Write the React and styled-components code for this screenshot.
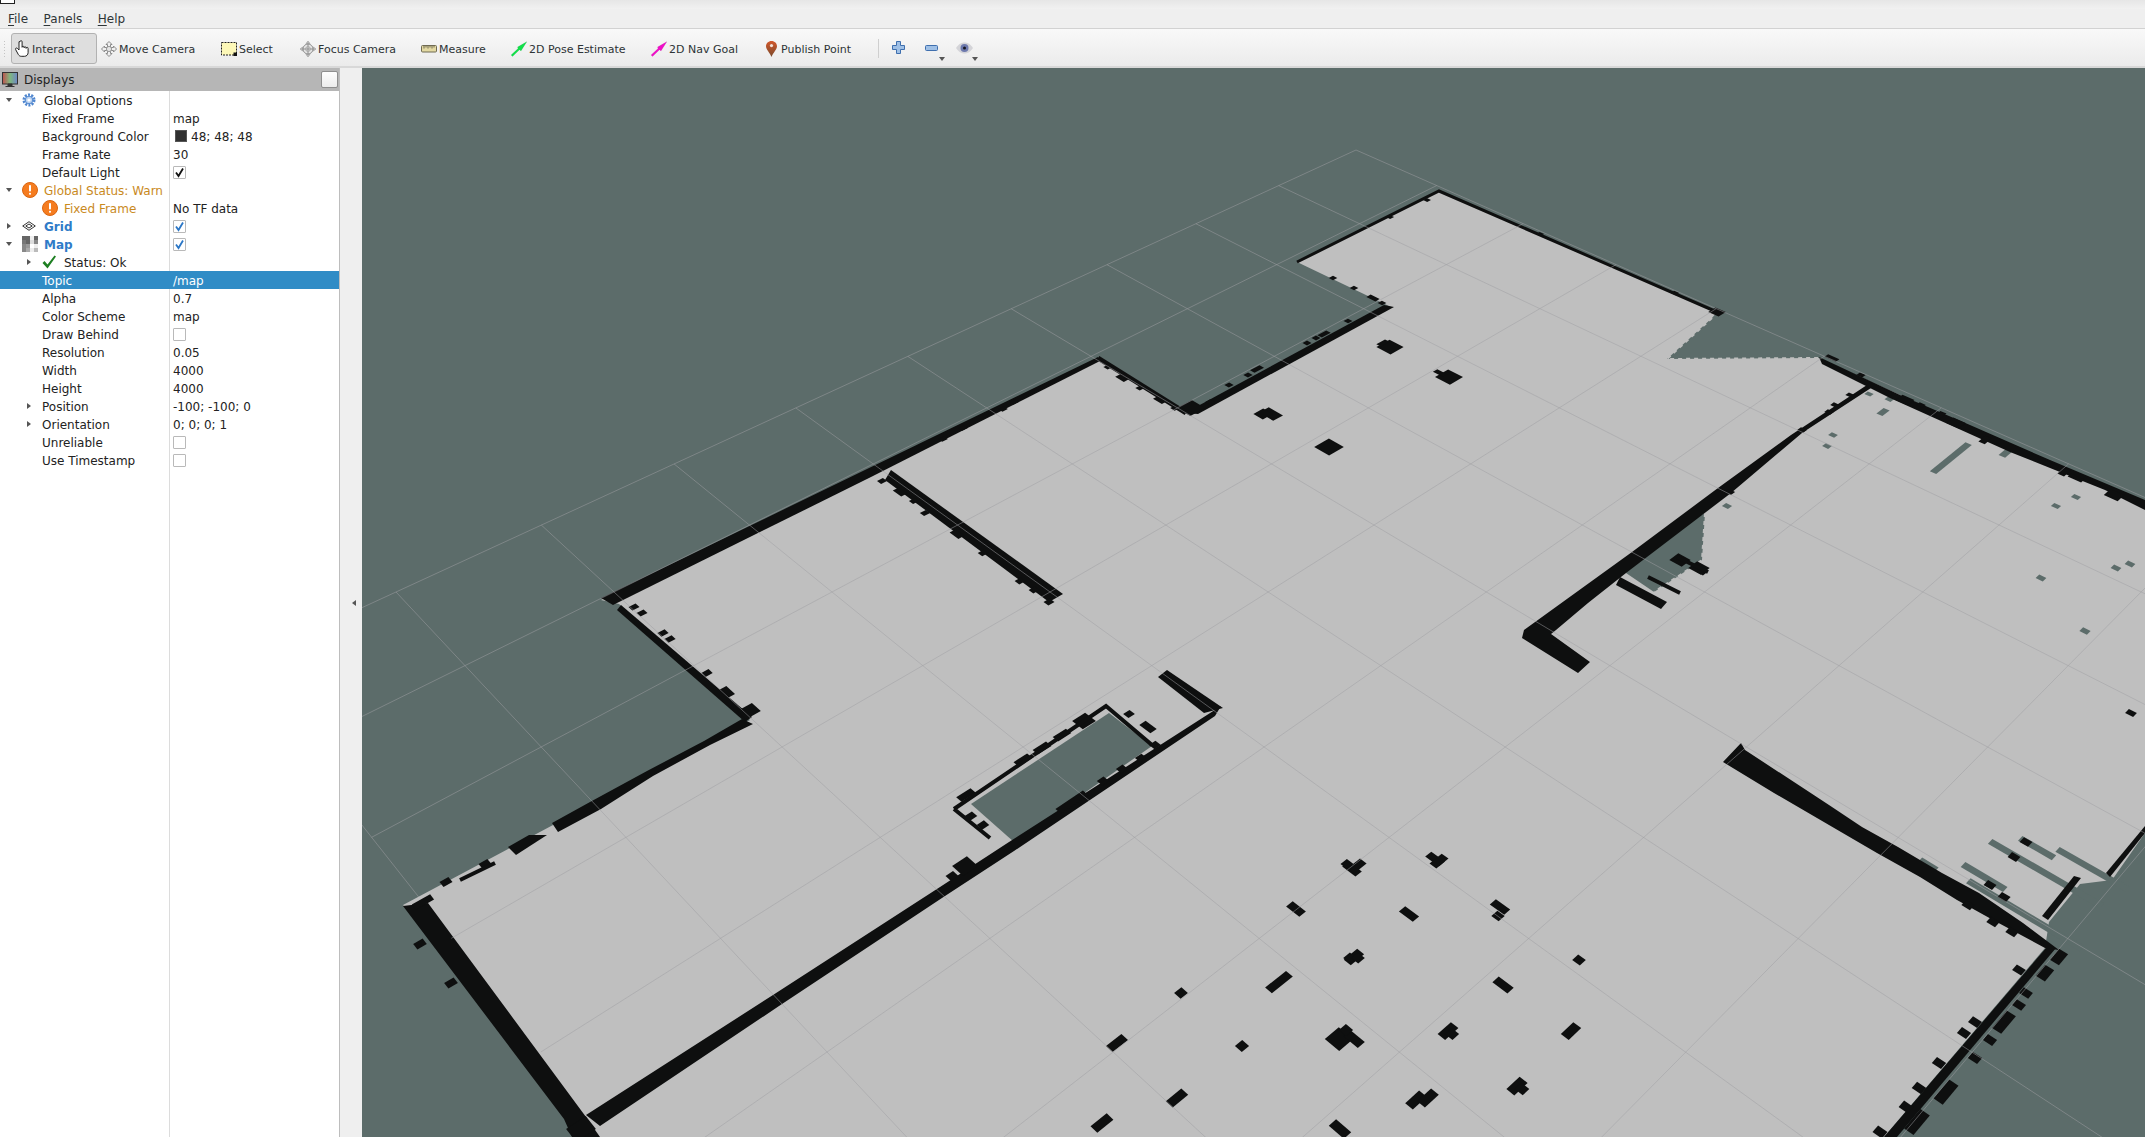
import styled, { createGlobalStyle } from "styled-components";

const GlobalStyle = createGlobalStyle`
  html, body { margin: 0; padding: 0; height: 100%; overflow: hidden; background: #efefef; }
  body { font-family: "DejaVu Sans", sans-serif; font-size: 12px; color: #2e3436; }
`;

/* ---------- map geometry: grid cell coords (i, j) <-> screen pixels ---------- */

const fitHomography = (pairs) => {
  const m = [];
  pairs.forEach(([i, j, x, y]) => {
    m.push([i, j, 1, 0, 0, 0, -i * x, -j * x, x]);
    m.push([0, 0, 0, i, j, 1, -i * y, -j * y, y]);
  });
  for (let c = 0; c < 8; c++) {
    let p = c;
    for (let r = c + 1; r < 8; r++) if (Math.abs(m[r][c]) > Math.abs(m[p][c])) p = r;
    [m[c], m[p]] = [m[p], m[c]];
    for (let r = 0; r < 8; r++) {
      if (r === c) continue;
      const f = m[r][c] / m[c][c];
      for (let k = c; k < 9; k++) m[r][k] -= f * m[c][k];
    }
  }
  return [...m.map((row, c) => row[8] / row[c]), 1];
};

const H = fitHomography([
  [0, 0, 1356, 150],
  [0, 9, 396, 592],
  [5, 9, 827, 1052],
  [7, 1, 1999, 525],
]);

const project = (i, j) => {
  const w = H[6] * i + H[7] * j + H[8];
  return [(H[0] * i + H[1] * j + H[2]) / w, (H[3] * i + H[4] * j + H[5]) / w];
};

const unproject = (x, y) => {
  const [a, b, c, d, e, f, g, h, k] = H;
  const w = (d * h - e * g) * x + (b * g - a * h) * y + (a * e - b * d);
  return [
    ((e * k - f * h) * x + (c * h - b * k) * y + (b * f - c * e)) / w,
    ((f * g - d * k) * x + (a * k - c * g) * y + (c * d - a * f)) / w,
  ];
};

const CELL = 0.05;

// one occupancy cell block, centred on a screen point, ni x nj cells
const blockPoints = ([x, y, ni = 1, nj = 1]) => {
  const [i, j] = unproject(x, y);
  const di = (ni * CELL) / 2;
  const dj = (nj * CELL) / 2;
  return [
    project(i - di, j - dj),
    project(i + di, j - dj),
    project(i + di, j + dj),
    project(i - di, j + dj),
  ]
    .map((p) => p.map((v) => v.toFixed(1)).join(","))
    .join(" ");
};

const FREE_SPACE =
  "1439,191 1717,312 1712,318 1667,359 1819,358 2145,507 2145,833 2112,880 2080,884 2049,922 2045,948 1884,1137 590,1137 587,1119 403,905 750,720 619,604 601,600 1098,358 1186,413 1391,307 1297,262";

const UNKNOWN_PATCHES = [
  "1705,513 1702,560 1677,577 1654,592 1626,573 1632,553",
  "1109,713 1152,746 1014,842 971,804",
];

const WALLS = [
  "1867,385 1791,435 1718,488 1632,552 1524,630 1522,638 1578,673 1590,662 1551,634 1556,630 1588,603 1626,573 1731,493 1802,433 1871,388",
  "1620,577 1667,602 1661,609 1616,585",
  "1384,305 1394,307 1198,414 1185,413",
  "1098,357 601,598 613,605 871,477 1100,361",
  "891,470 1063,594 1049,602 885,480",
  "621,605 752,717 745,722 617,610",
  "742,719 753,724 710,745 653,776 601,809 558,832 552,823 590,802 647,771 704,741",
  "508,847 529,835 547,835 516,855",
  "403,906 428,903 586,1117 600,1137 572,1137 564,1119",
  "586,1115 773,995 940,887 1009,842 1221,706 1215,716 1014,851 945,896 779,1006 600,1126",
  "1167,670 1158,677 1204,713 1223,708",
  "1723,762 1741,743 1745,750 1829,805 1862,827 1898,847 1942,873 1979,893 2023,923 2059,950 2045,948 1993,920 1957,900 1920,877 1877,853 1774,793",
  "2046,948 2056,948 1897,1137 1884,1137",
  "1819,357 1900,395 1970,425 2050,460 2145,500 2145,510 2105,490 2060,472 2010,452 1950,425 1890,398 1822,364",
  "2145,833 2110,877 2106,873 2145,826",
  "2081,878 2048,920 2042,916 2074,876",
];

const THIN_WALLS = [
  ["1297,262 1439,191 1717,312", 3],
  ["1098,358 1186,413", 5],
  ["954,809 1106,706 1152,745", 4],
  ["954,809 990,838", 4],
  ["460,880 495,863", 4],
  ["1648,577 1680,593", 4],
  ["1677,557 1708,572", 4],
];

// jagged borders between free and unknown space
const JAGGED_EDGES = [
  "1712,318 1667,359 1819,358",
  "1705,513 1702,560 1677,577 1654,592",
];

const BLOCKS = [
  // obstacles in the open space
  [1390, 347, 3, 3], [1383, 343, 1, 2], [1449, 377, 3, 3], [1440, 373, 2, 1], [1271, 414, 3, 2], [1263, 414, 2, 2], [1329, 447, 3, 3],
  [1352, 869, 2, 1], [1347, 864, 1, 1], [1357, 866, 1, 2], [1435, 859, 2, 1], [1439, 861, 1, 2], [1296, 909, 2, 1], [1409, 914, 2, 1],
  [1500, 907, 2, 1], [1498, 916, 1, 1], [1354, 957, 1, 2], [1350, 958, 1, 1], [1358, 958, 1, 1], [1579, 960], [1503, 985, 2, 1],
  [1279, 982, 1, 3], [1181, 993], [1117, 1043, 1, 2], [1242, 1046], [1339, 1039, 2, 2], [1354, 1039, 2, 1], [1346, 1030, 1, 1],
  [1448, 1031, 1, 2], [1452, 1034, 1, 1], [1571, 1031, 1, 2], [1517, 1086, 1, 2], [1522, 1089, 1, 1], [1416, 1100, 1, 2], [1428, 1098, 1, 2],
  [1177, 1098, 1, 2], [1102, 1123, 1, 2], [1340, 1129, 2, 1], [2131, 713],
  // teeth along the walls
  [882, 481], [900, 492, 2, 1], [914, 501], [925, 513], [957, 534, 2, 1], [983, 553], [1020, 581], [1034, 590], [1049, 602],
  [634, 607], [642, 613], [663, 633], [670, 639], [707, 673], [727, 692, 2, 1], [749, 711, 2, 2],
  [966, 795, 1, 2], [1023, 760, 1, 2], [1042, 748, 1, 2], [1062, 735, 1, 2], [1084, 721, 2, 2], [1129, 714], [1148, 727, 2, 1], [1155, 745],
  [1141, 758], [1122, 769], [1103, 781], [1072, 802, 1, 4], [965, 866, 2, 2], [952, 876], [971, 816], [983, 825],
  [420, 944], [451, 983], [581, 1129, 2, 2], [446, 882], [485, 864], [423, 902, 1, 2],
  [2019, 970], [2026, 993], [2019, 1005], [2004, 1022, 1, 3], [1975, 1022], [1964, 1033], [1990, 1040], [1975, 1058], [1939, 1063], [1919, 1088], [1946, 1092, 1, 3], [1906, 1107], [1917, 1122, 1, 3], [1880, 1132], [2045, 973, 1, 2], [2059, 957, 1, 2],
  [1968, 905], [1993, 922], [2012, 932], [1990, 885], [2004, 897], [2026, 842], [2014, 857],
  [1832, 358, 2, 1], [1861, 375], [1886, 392, 2, 1], [1905, 400, 2, 2], [1921, 405], [1940, 415, 1, 2], [1956, 423, 2, 2], [1985, 440, 1, 2], [2051, 465, 2, 1], [2064, 472, 1, 2], [2076, 478, 2, 1], [2114, 495, 2, 2],
  [1802, 430], [1835, 405], [1829, 412], [1850, 395], [1730, 492], [1680, 560, 2, 2], [1699, 568, 2, 2], [1702, 572],
  [1427, 200], [1390, 217], [1333, 278], [1354, 288], [1373, 298, 2, 1], [1382, 303],
  [1540, 234], [1675, 293], [1717, 312, 2, 2], [1348, 321], [1324, 334, 1, 2], [1316, 338], [1307, 343], [1257, 369, 1, 2], [1248, 375], [1229, 385], [1210, 402], [1191, 408, 3, 3],
  [943, 439], [963, 428], [1003, 409], [1014, 402],
  [1108, 367], [1122, 378, 2, 1], [1140, 388], [1160, 400, 2, 1], [1175, 408],
];

const SPECKS = [
  [1869, 394], [1891, 398, 1, 2], [1883, 412, 1, 2], [1833, 435], [1827, 446], [1951, 458, 1, 10], [2007, 452, 1, 3], [1727, 506],
  [2076, 497], [2056, 506], [2116, 568], [2130, 564], [2041, 578], [2085, 631], [1928, 865, 2, 1], [2037, 848, 4, 1],
  [2045, 873, 13, 1], [2092, 869, 8, 1], [1984, 877, 5, 1], [2024, 914, 13, 1],
];

const gridPath = () => {
  let d = "";
  for (let n = 0; n <= 10; n++) {
    const [ax, ay] = project(n, 0);
    const [bx, by] = project(n, 10);
    d += `M${ax} ${ay}L${bx} ${by}`;
    // the far edge (j = 10) runs inside the thick wall, it gets its own path under the walls
    if (n === 10) break;
    const [cx, cy] = project(0, n);
    const [ex, ey] = project(10, n);
    d += `M${cx} ${cy}L${ex} ${ey}`;
  }
  return d;
};

const farEdgePath = () => {
  const [ax, ay] = project(0, 10);
  const [bx, by] = project(10, 10);
  return `M${ax} ${ay}L${bx} ${by}`;
};

/* ---------- small icons ---------- */

const HandIcon = () => (
  <svg width="16" height="17" viewBox="0 0 16 17">
    <path
      d="M5 1.7v8.3L3.4 8.4C2.3 7.4 1 8.4 1.7 9.7L4.4 14.6c.6 1 1.5 1.7 2.8 1.7h3.3c2 0 3.6-1.6 3.6-3.6V8.4c0-1.5-2-1.5-2 0V7.8c0-1.4-2-1.4-2 0V7.3c0-1.4-2-1.4-2 0V1.7c0-1.4-2.1-1.4-2.1 0Z"
      fill="#fff"
      stroke="#222"
      strokeWidth="1"
    />
  </svg>
);

const MoveIcon = () => (
  <svg width="16" height="16" viewBox="0 0 16 16">
    <path
      d="M8 .5L11 3.5H9.5V6.5H12.5V5L15.5 8 12.5 11V9.5H9.5V12.5H11L8 15.5 5 12.5H6.5V9.5H3.5V11L.5 8 3.5 5V6.5H6.5V3.5H5Z"
      fill="#f0f0f0"
      stroke="#8a8a8a"
    />
    <circle cx="8" cy="8" r="2.6" fill="#e4e4e4" stroke="#999" />
  </svg>
);

const FocusIcon = () => (
  <svg width="16" height="16" viewBox="0 0 16 16">
    <path d="M8 0L10 2.6H6ZM8 16L10 13.4H6ZM0 8L2.6 6V10ZM16 8L13.4 6V10Z" fill="#bdbdbd" stroke="#9a9a9a" strokeWidth="0.6" />
    <circle cx="8" cy="8" r="5" fill="#e6e6e6" stroke="#8e8e8e" />
    <path d="M8 2.5v11M2.5 8h11" stroke="#8e8e8e" />
    <circle cx="8" cy="8" r="2.4" fill="none" stroke="#a8a8a8" />
  </svg>
);

const SelectIcon = () => (
  <svg width="16" height="14" viewBox="0 0 16 14">
    <rect x="0.5" y="0.5" width="15" height="12.5" fill="#fdf8b8" stroke="#222" strokeDasharray="2 1" />
    <rect x="12.5" y="10.5" width="3.5" height="3.5" fill="#111" />
  </svg>
);

const MeasureIcon = () => (
  <svg width="16" height="8" viewBox="0 0 16 8">
    <rect x="0.5" y="0.5" width="15" height="6.5" rx="1" fill="#e3d9a2" stroke="#6f6a52" />
    <path d="M3 1v2.5M5 1v1.5M7 1v2.5M9 1v1.5M11 1v2.5M13 1v1.5" stroke="#6f6a52" />
  </svg>
);

const ArrowIcon = ({ color }) => (
  <svg width="16" height="16" viewBox="0 0 16 16">
    <polygon points="0,14 7,7.5 6.5,6 16,0.5 10,10 8.5,8.8 1.5,15.5" fill={color} stroke="#00000022" strokeWidth="0.4" />
  </svg>
);

const PinIcon = () => (
  <svg width="11" height="16" viewBox="0 0 11 16">
    <defs>
      <linearGradient id="pin" x1="0" x2="0" y1="0" y2="1">
        <stop offset="0" stopColor="#d2582c" />
        <stop offset="1" stopColor="#7a4a2c" />
      </linearGradient>
    </defs>
    <path d="M5.5 0C2.3 0 0 2.3 0 5.3 0 8.5 4 12 5.5 16 7 12 11 8.5 11 5.3 11 2.3 8.7 0 5.5 0Z" fill="url(#pin)" />
    <circle cx="5.5" cy="4.6" r="1.6" fill="#f3e3da" />
  </svg>
);

const PlusIcon = () => (
  <svg width="13" height="13" viewBox="0 0 13 13">
    <path d="M4.5.5h4v4h4v4h-4v4h-4v-4h-4v-4h4z" fill="#9fc0e6" stroke="#3f6fae" />
  </svg>
);

const MinusIcon = () => (
  <svg width="13" height="6" viewBox="0 0 13 6">
    <rect x="0.5" y="0.5" width="12" height="5" rx="1" fill="#9fc0e6" stroke="#3f6fae" />
  </svg>
);

const EyeIcon = () => (
  <svg width="17" height="12" viewBox="0 0 17 12">
    <path d="M0 6C3 1.5 6 .5 8.5 .5S14 1.5 17 6C14 10.5 11 11.5 8.5 11.5S3 10.5 0 6Z" fill="#d4d4d8" />
    <circle cx="8.5" cy="6" r="4" fill="#6d79ad" />
    <circle cx="8.5" cy="6" r="1.5" fill="#15151f" />
  </svg>
);

const MonitorIcon = () => (
  <svg width="16" height="16" viewBox="0 0 16 16">
    <defs>
      <linearGradient id="screen" x1="0" x2="1" y1="0" y2="0">
        <stop offset="0" stopColor="#c0504d" />
        <stop offset="0.5" stopColor="#7fb87f" />
        <stop offset="1" stopColor="#6f86c8" />
      </linearGradient>
    </defs>
    <rect x="0.5" y="0.5" width="15" height="11.5" fill="url(#screen)" stroke="#333" />
    <path d="M6 12h4v2H6zM3.5 14.5h9" stroke="#333" fill="#333" />
  </svg>
);

const GearIcon = () => (
  <svg width="14" height="14" viewBox="0 0 14 14">
    <circle cx="7" cy="7" r="5.2" fill="none" stroke="#4f86cf" strokeWidth="2.6" strokeDasharray="2 1.27" />
    <circle cx="7" cy="7" r="3.8" fill="#bcd3f0" stroke="#4f86cf" />
    <circle cx="7" cy="7" r="1.6" fill="#fff" />
  </svg>
);

const WarnIcon = () => (
  <svg width="16" height="16" viewBox="0 0 16 16">
    <circle cx="8" cy="8" r="7.5" fill="#f57c1f" stroke="#d9650f" />
    <rect x="7" y="3" width="2" height="6.5" rx="0.8" fill="#fff" />
    <rect x="7" y="10.7" width="2" height="2" rx="0.8" fill="#fff" />
  </svg>
);

const GridIcon = () => (
  <svg width="14" height="10" viewBox="0 0 14 10">
    <path d="M7 .7L13.3 5 7 9.3.7 5zM7 3L10.2 5 7 7 3.8 5z" fill="none" stroke="#333" />
  </svg>
);

const MAP_TILES = [
  "#666", "#666", "#eee", "#666",
  "#777", "#666", "#ddd", "#888",
  "#888", "#999", "#fff", "#eee",
  "#888", "#aaa", "#eee", "#bbb",
];

const MapIcon = () => (
  <svg width="16" height="16" viewBox="0 0 16 16">
    {MAP_TILES.map((fill, n) => (
      <rect key={n} x={(n % 4) * 4} y={Math.floor(n / 4) * 4} width="4" height="4" fill={fill} />
    ))}
  </svg>
);

const OkIcon = () => (
  <svg width="14" height="14" viewBox="0 0 14 14">
    <path d="M0.5 8L2.5 6 5.5 9.5 12.5 .5 14 1.5 5.5 13.5z" fill="#1e7f22" />
  </svg>
);

const ICONS = { gear: GearIcon, warn: WarnIcon, grid: GridIcon, map: MapIcon, ok: OkIcon };

/* ---------- data ---------- */

const TOOLS = [
  { label: "Interact", icon: <HandIcon />, w: 86, active: true },
  { label: "Move Camera", icon: <MoveIcon />, w: 120 },
  { label: "Select", icon: <SelectIcon />, w: 79 },
  { label: "Focus Camera", icon: <FocusIcon />, w: 121 },
  { label: "Measure", icon: <MeasureIcon />, w: 90 },
  { label: "2D Pose Estimate", icon: <ArrowIcon color="#12e04a" />, w: 140 },
  { label: "2D Nav Goal", icon: <ArrowIcon color="#f010c8" />, w: 112 },
  { label: "Publish Point", icon: <PinIcon />, w: 110 },
];

const ROWS = [
  { label: "Global Options", level: 0, arrow: "down", icon: "gear" },
  { label: "Fixed Frame", level: 1, value: "map" },
  { label: "Background Color", level: 1, value: "48; 48; 48", swatch: "#303030" },
  { label: "Frame Rate", level: 1, value: "30" },
  { label: "Default Light", level: 1, check: "on" },
  { label: "Global Status: Warn", level: 0, arrow: "down", icon: "warn", tone: "warn" },
  { label: "Fixed Frame", level: 1, icon: "warn", tone: "warn", value: "No TF data" },
  { label: "Grid", level: 0, arrow: "right", icon: "grid", tone: "display", check: "blue" },
  { label: "Map", level: 0, arrow: "down", icon: "map", tone: "display", check: "blue" },
  { label: "Status: Ok", level: 1, arrow: "right", icon: "ok" },
  { label: "Topic", level: 1, value: "/map", selected: true },
  { label: "Alpha", level: 1, value: "0.7" },
  { label: "Color Scheme", level: 1, value: "map" },
  { label: "Draw Behind", level: 1, check: "off" },
  { label: "Resolution", level: 1, value: "0.05" },
  { label: "Width", level: 1, value: "4000" },
  { label: "Height", level: 1, value: "4000" },
  { label: "Position", level: 1, arrow: "right", value: "-100; -100; 0" },
  { label: "Orientation", level: 1, arrow: "right", value: "0; 0; 0; 1" },
  { label: "Unreliable", level: 1, check: "off" },
  { label: "Use Timestamp", level: 1, check: "off" },
];

/* ---------- styled parts ---------- */

const Window = styled.div`
  width: 2145px;
  height: 1137px;
  display: flex;
  flex-direction: column;
  background: #efefef;
  overflow: hidden;
`;

const TitleStrip = styled.div`
  height: 9px;
  flex: none;
  background: linear-gradient(#e6e6e6, #f1f1f1);
  position: relative;
  &::before {
    content: "";
    position: absolute;
    left: 0;
    top: -9px;
    width: 13px;
    height: 11px;
    border: 1px solid #222;
    background: #fff;
  }
`;

const MenuBar = styled.div`
  height: 20px;
  flex: none;
  box-sizing: border-box;
  display: flex;
  align-items: center;
  gap: 15.5px;
  padding-left: 8px;
  background: #efefef;
  border-bottom: 1px solid #d2d2d2;
`;

const MenuItem = styled.span`
  u { text-underline-offset: 2px; }
`;

const ToolBar = styled.div`
  height: 39px;
  flex: none;
  display: flex;
  align-items: center;
  box-sizing: border-box;
  padding: 2px 0 0 3px;
  background: linear-gradient(#f9f9f9, #ebebeb);
  border-bottom: 2px solid #d8d8d8;
  font-size: 11px;
`;

const Grip = styled.div`
  width: 3px;
  height: 17px;
  margin-right: 5px;
  background-image: radial-gradient(#c4c4c4 0.7px, transparent 0.8px);
  background-size: 3px 3px;
`;

const ToolButton = styled.div`
  width: ${(p) => p.$w}px;
  height: 31px;
  flex: none;
  box-sizing: border-box;
  display: flex;
  align-items: center;
  gap: 2px;
  padding-left: ${(p) => (p.$active ? 2 : 3)}px;
  border: 1px solid ${(p) => (p.$active ? "#b2b2b2" : "transparent")};
  border-radius: 3px;
  background: ${(p) => (p.$active ? "#dedede" : "transparent")};
`;

const ToolIcon = styled.span`
  width: 16px;
  flex: none;
  display: flex;
  justify-content: center;
`;

const ToolLabel = styled.span`
  padding-top: 2px;
`;

const ToolSeparator = styled.div`
  width: 1px;
  height: 19px;
  margin: 0 3px 0 9px;
  background: #cfcfcf;
`;

const ViewButton = styled.div`
  width: 33px;
  height: 31px;
  flex: none;
  display: flex;
  align-items: center;
  justify-content: center;
  position: relative;
  padding-bottom: 2px;
  box-sizing: border-box;
  ${(p) =>
    p.$menu &&
    `&::after {
      content: "";
      position: absolute;
      right: 3px;
      bottom: 3px;
      border: 3px solid transparent;
      border-top: 4px solid #555;
      border-bottom: 0;
    }`}
`;

const Body = styled.div`
  flex: 1;
  min-height: 0;
  display: flex;
`;

const Panel = styled.aside`
  width: 340px;
  flex: none;
  display: flex;
  flex-direction: column;
  background: #fff;
  border-right: 1px solid #bdbdbd;
  box-sizing: border-box;
`;

const PanelHeader = styled.div`
  height: 23px;
  flex: none;
  display: flex;
  align-items: center;
  gap: 6px;
  padding: 0 1px 0 2px;
  background: #b6b6b6;
  color: #222;
`;

const FloatButton = styled.div`
  width: 15px;
  height: 15px;
  margin-left: auto;
  border: 1px solid #8e8e8e;
  border-radius: 2px;
  background: linear-gradient(#fdfdfd, #ececec);
`;

const Tree = styled.div`
  flex: 1;
  position: relative;
`;

const Divider = styled.div`
  position: absolute;
  left: 169px;
  top: 0;
  bottom: 0;
  width: 1px;
  background: #dcdcdc;
`;

const Row = styled.div`
  height: 18px;
  display: grid;
  grid-template-columns: 170px 1fr;
  line-height: 16px;
  position: relative;
  background: ${(p) => (p.$selected ? "#308cc6" : "transparent")};
  color: ${(p) => (p.$selected ? "#fff" : "#222")};
`;

const NameCell = styled.div`
  display: flex;
  align-items: center;
  padding-left: ${(p) => 2 + p.$level * 20}px;
  white-space: nowrap;
`;

const ArrowSlot = styled.span`
  width: 20px;
  flex: none;
  display: flex;
  justify-content: ${(p) => (p.$level ? "flex-start" : "center")};
  padding-left: ${(p) => (p.$level ? "5px" : "0")};
  padding-right: ${(p) => (p.$level ? "0" : "6px")};
  box-sizing: border-box;
`;

const Arrow = styled.span`
  width: 0;
  height: 0;
  border-style: solid;
  border-color: transparent;
  ${(p) =>
    p.$dir === "down"
      ? `border-width: 4px 3.5px 0; border-top-color: #555;`
      : `border-width: 3.5px 0 3.5px 4px; border-left-color: #555;`}
`;

const IconSlot = styled.span`
  width: 22px;
  flex: none;
  display: flex;
  align-items: center;
`;

const Label = styled.span`
  padding-top: 1px;
  color: ${(p) => (p.$tone === "warn" ? "#c98a1e" : p.$tone === "display" ? "#2f7bc8" : "inherit")};
  font-weight: ${(p) => (p.$tone === "display" ? 700 : 400)};
`;

const ValueCell = styled.div`
  display: flex;
  align-items: center;
  padding-left: 3px;
  gap: 4px;
  white-space: nowrap;
`;

const ValueText = styled.span`
  padding-top: 1px;
`;

const Swatch = styled.span`
  width: 12px;
  height: 12px;
  margin-left: 2px;
  background: ${(p) => p.$color};
  border: 1px solid #555;
  box-sizing: border-box;
`;

const Check = styled.span`
  width: 13px;
  height: 13px;
  box-sizing: border-box;
  border: 1px solid #b9b9b9;
  border-radius: 1px;
  background: #fff;
  display: flex;
`;

const Splitter = styled.div`
  width: 22px;
  flex: none;
  display: flex;
  align-items: center;
  justify-content: center;
  padding-left: 6px;
  box-sizing: border-box;
  &::before {
    content: "";
    border: 3.5px solid transparent;
    border-right: 4px solid #555;
    border-left: 0;
    margin-top: 1px;
  }
`;

const Viewport = styled.main`
  flex: 1;
  min-width: 0;
  background: #5c6c6a;
  overflow: hidden;
`;

const MapDrawing = styled.svg`
  display: block;
  width: 1783px;
  height: 1069px;
`;

/* ---------- components ---------- */

const TickMark = ({ color }) => (
  <svg width="11" height="11" viewBox="0 0 11 11">
    <path d="M2 5.5L4.5 9 9 1.5" fill="none" stroke={color} strokeWidth="1.8" />
  </svg>
);

const TreeRow = ({ row }) => {
  const Icon = row.icon && ICONS[row.icon];
  return (
    <Row $selected={row.selected}>
      <NameCell $level={row.level}>
        <ArrowSlot $level={row.level}>{row.arrow && <Arrow $dir={row.arrow} />}</ArrowSlot>
        {Icon && (
          <IconSlot>
            <Icon />
          </IconSlot>
        )}
        <Label $tone={row.tone}>{row.label}</Label>
      </NameCell>
      <ValueCell>
        {row.swatch && <Swatch $color={row.swatch} />}
        {row.value && <ValueText>{row.value}</ValueText>}
        {row.check && (
          <Check>
            {row.check !== "off" && <TickMark color={row.check === "blue" ? "#2a76c6" : "#111"} />}
          </Check>
        )}
      </ValueCell>
    </Row>
  );
};

const MapView = () => (
  <MapDrawing viewBox="362 68 1783 1069">
    <path d={farEdgePath()} fill="none" stroke="#a0a0a4" strokeOpacity="0.5" strokeWidth="1" />
    <polygon points={FREE_SPACE} fill="#bfbfbf" />
    {UNKNOWN_PATCHES.map((p) => (
      <polygon key={p} points={p} fill="#5c6c6a" />
    ))}
    {JAGGED_EDGES.map((p) => (
      <polyline key={p} points={p} fill="none" stroke="#bfbfbf" strokeWidth="2" strokeDasharray="4 4" />
    ))}
    {SPECKS.map((s) => (
      <polygon key={s.join()} points={blockPoints(s)} fill="#5c6c6a" />
    ))}
    <g fill="#0e0f0f">
      {WALLS.map((p) => (
        <polygon key={p} points={p} />
      ))}
      {BLOCKS.map((b) => (
        <polygon key={b.join()} points={blockPoints(b)} />
      ))}
    </g>
    {THIN_WALLS.map(([p, w]) => (
      <polyline key={p} points={p} fill="none" stroke="#0e0f0f" strokeWidth={w} />
    ))}
    <path d={gridPath()} fill="none" stroke="#a0a0a4" strokeOpacity="0.5" strokeWidth="1" />
  </MapDrawing>
);

export default function App() {
  return (
    <>
      <GlobalStyle />
      <Window>
        <TitleStrip />
        <MenuBar>
          <MenuItem><u>F</u>ile</MenuItem>
          <MenuItem><u>P</u>anels</MenuItem>
          <MenuItem><u>H</u>elp</MenuItem>
        </MenuBar>
        <ToolBar>
          <Grip />
          {TOOLS.map((t) => (
            <ToolButton key={t.label} $w={t.w} $active={t.active}>
              <ToolIcon>{t.icon}</ToolIcon>
              <ToolLabel>{t.label}</ToolLabel>
            </ToolButton>
          ))}
          <ToolSeparator />
          <ViewButton><PlusIcon /></ViewButton>
          <ViewButton $menu><MinusIcon /></ViewButton>
          <ViewButton $menu><EyeIcon /></ViewButton>
        </ToolBar>
        <Body>
          <Panel>
            <PanelHeader>
              <MonitorIcon />
              Displays
              <FloatButton />
            </PanelHeader>
            <Tree>
              <Divider />
              {ROWS.map((r) => (
                <TreeRow key={r.label + r.level + (r.icon || "")} row={r} />
              ))}
            </Tree>
          </Panel>
          <Splitter />
          <Viewport>
            <MapView />
          </Viewport>
        </Body>
      </Window>
    </>
  );
}
